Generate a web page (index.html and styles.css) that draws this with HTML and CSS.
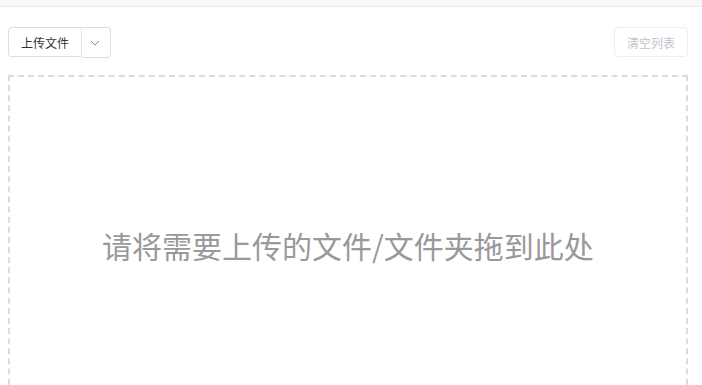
FILE: index.html
```html
<!DOCTYPE html>
<html lang="zh-CN">
<head>
  <meta charset="UTF-8" />
  <title>上传文件</title>
  <link rel="stylesheet" href="styles.css">
</head>
<body>

<div class="top-strip"></div>

<div class="upload-panel">
  <div class="toolbar">
    <div class="btn-group">
      <button class="btn upload-btn">上传文件</button>
      <button class="btn drop-btn">
        <svg width="10" height="6" viewBox="0 0 10 6"><path d="M1 1 L5 5 L9 1" fill="none" stroke="#888" stroke-width="1"/></svg>
      </button>
    </div>
    <button class="btn clear-btn" disabled>清空列表</button>
  </div>

  <div class="dropzone">
    <p class="drop-tip">请将需要上传的文件/文件夹拖到此处</p>
  </div>
</div>

</body>
</html>
```

FILE: styles.css
```css
body {
  margin: 0;
  font-family: "Noto Sans CJK SC", "Liberation Sans", sans-serif;
  background: #fff;
  overflow: hidden;
}
.top-strip {
  height: 6px;
  background: #f7f7f7;
  border-bottom: 1px solid #e8e8e8;
}
.upload-panel {
  width: 680px;
  margin-left: 8px;
}
.toolbar {
  display: flex;
  justify-content: space-between;
  align-items: flex-start;
  margin-top: 20px;
}
.btn-group {
  display: flex;
}
.btn {
  font-family: inherit;
  font-size: 12px;
  background: #fff;
  border: 1px solid #dcdfe6;
  color: #333;
  padding: 0;
  height: 30px;
  cursor: pointer;
}
.upload-btn {
  width: 74px;
  border-radius: 4px 0 0 4px;
  border-right: 1px solid #e4e4e4;
}
.drop-btn {
  width: 29px;
  height: 31px;
  border-left: none;
  border-radius: 0 4px 4px 0;
  display: flex;
  align-items: center;
  justify-content: center;
}
.drop-btn svg {
  margin-left: -2px;
}
.clear-btn {
  width: 74px;
  border-color: #ebeef5;
  color: #c0c4cc;
  border-radius: 4px;
  cursor: default;
}
.dropzone {
  margin-top: 17px;
  height: 336px;
  border: 2px dashed #dcdcdc;
  display: flex;
  align-items: center;
  justify-content: center;
}
.drop-tip {
  margin: 0;
  font-size: 30px;
  color: #999;
}
```
